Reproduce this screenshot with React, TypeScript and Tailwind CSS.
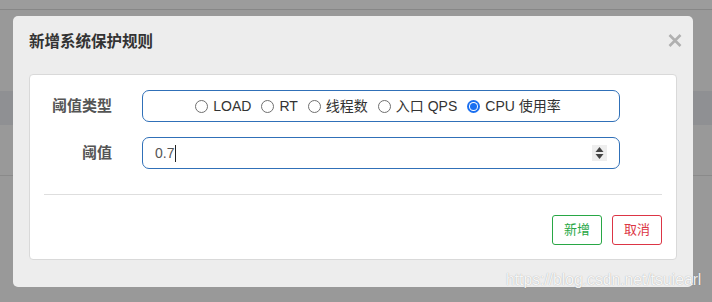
import React from "react";

const font = { fontFamily: '"Liberation Sans", "Noto Sans CJK SC", sans-serif' };

function Radio({ label, checked }: { label: string; checked?: boolean }) {
  return (
    <label className="flex items-center gap-[5px]">
      {checked ? (
        <span className="flex h-[13px] w-[13px] items-center justify-center rounded-full bg-[#1a6ff0]">
          <span className="flex h-[9px] w-[9px] items-center justify-center rounded-full bg-white">
            <span className="h-[7px] w-[7px] rounded-full bg-[#1a6ff0]" />
          </span>
        </span>
      ) : (
        <span className="h-[13px] w-[13px] rounded-full border border-[#6f6f6f] bg-white" />
      )}
      <span className="text-[14px] text-[#333]">{label}</span>
    </label>
  );
}

export default function App() {
  return (
    <div className="relative h-[302px] w-[712px] overflow-hidden bg-[#999999]" style={font}>
      {/* underlying page (dimmed) */}
      <div className="flex flex-col">
        <div className="h-[9px] bg-[#9c9c9c]" />
        <div className="h-px bg-[#878787]" />
        <div className="h-[81px]" />
        <div className="h-[34px] bg-[#8f9093]" />
        <div className="h-[50px]" />
        <div className="h-px bg-[#8a8a8a]" />
      </div>

      {/* modal */}
      <div className="absolute left-[13px] top-[16px] flex h-[271px] w-[680px] flex-col rounded-[5px] bg-[#ededed]">
        <div className="flex h-[58px] items-start justify-between pl-4 pr-[11px] pt-[16px]">
          <h4 className="text-[15.5px] font-bold leading-5 text-[#333]">新增系统保护规则</h4>
          <svg width="14" height="13" viewBox="0 0 14 13" className="mt-[2px]">
            <path d="M1.5 1 L12.5 12 M12.5 1 L1.5 12" stroke="#b0b0b0" strokeWidth="2.6" strokeLinecap="butt" />
          </svg>
        </div>

        <div className="mx-4 flex h-[186px] flex-col rounded-[4px] border border-[#d9d9d9] bg-white px-[14px] pb-[14px] pt-[15px]">
          <div className="flex flex-col gap-[15px]">
            <div className="flex items-center">
              <div className="w-[68px] text-right text-[15px] font-bold text-[#555]">阈值类型</div>
              <div className="ml-[30px] flex h-[32px] w-[478px] items-center justify-center gap-[10px] rounded-[7px] border border-[#3070b8] pr-[6px]">
                <Radio label="LOAD" />
                <Radio label="RT" />
                <Radio label="线程数" />
                <Radio label="入口 QPS" />
                <Radio label="CPU 使用率" checked />
              </div>
            </div>
            <div className="flex items-center">
              <div className="w-[68px] text-right text-[15px] font-bold text-[#555]">阈值</div>
              <div className="ml-[30px] flex h-[32px] w-[478px] items-center justify-between rounded-[7px] border border-[#3070b8] pl-[12px] pr-[12px]">
                <span className="flex items-center text-[14px] text-[#555]">
                  0.7<span className="ml-px h-[17px] w-px bg-[#222]" />
                </span>
                <span className="flex h-[16px] w-[15px] flex-col items-center justify-center gap-[2px] bg-[#eeeeee]">
                  <svg width="9" height="5" viewBox="0 0 9 5"><path d="M0.5 5 L4.5 0 L8.5 5 Z" fill="#444" /></svg>
                  <svg width="9" height="5" viewBox="0 0 9 5"><path d="M0.5 0 L4.5 5 L8.5 0 Z" fill="#444" /></svg>
                </span>
              </div>
            </div>
          </div>

          <div className="mt-[25px] h-px bg-[#dedede]" />

          <div className="mt-[20px] flex justify-end gap-[10px]">
            <button className="flex h-[30px] w-[50px] items-center justify-center rounded-[3px] border border-[#28a745] bg-white text-[13px] text-[#28a745]">
              新增
            </button>
            <button className="flex h-[30px] w-[50px] items-center justify-center rounded-[3px] border border-[#dc3545] bg-white text-[13px] text-[#dc3545]">
              取消
            </button>
          </div>
        </div>
      </div>

      {/* watermark */}
      <div className="absolute left-[506px] top-[270px] text-[15.7px] leading-5 text-white/90 [text-shadow:0_0_1px_rgba(0,0,0,0.35)]">
        https://blog.csdn.net/tsuiearl
      </div>
    </div>
  );
}
